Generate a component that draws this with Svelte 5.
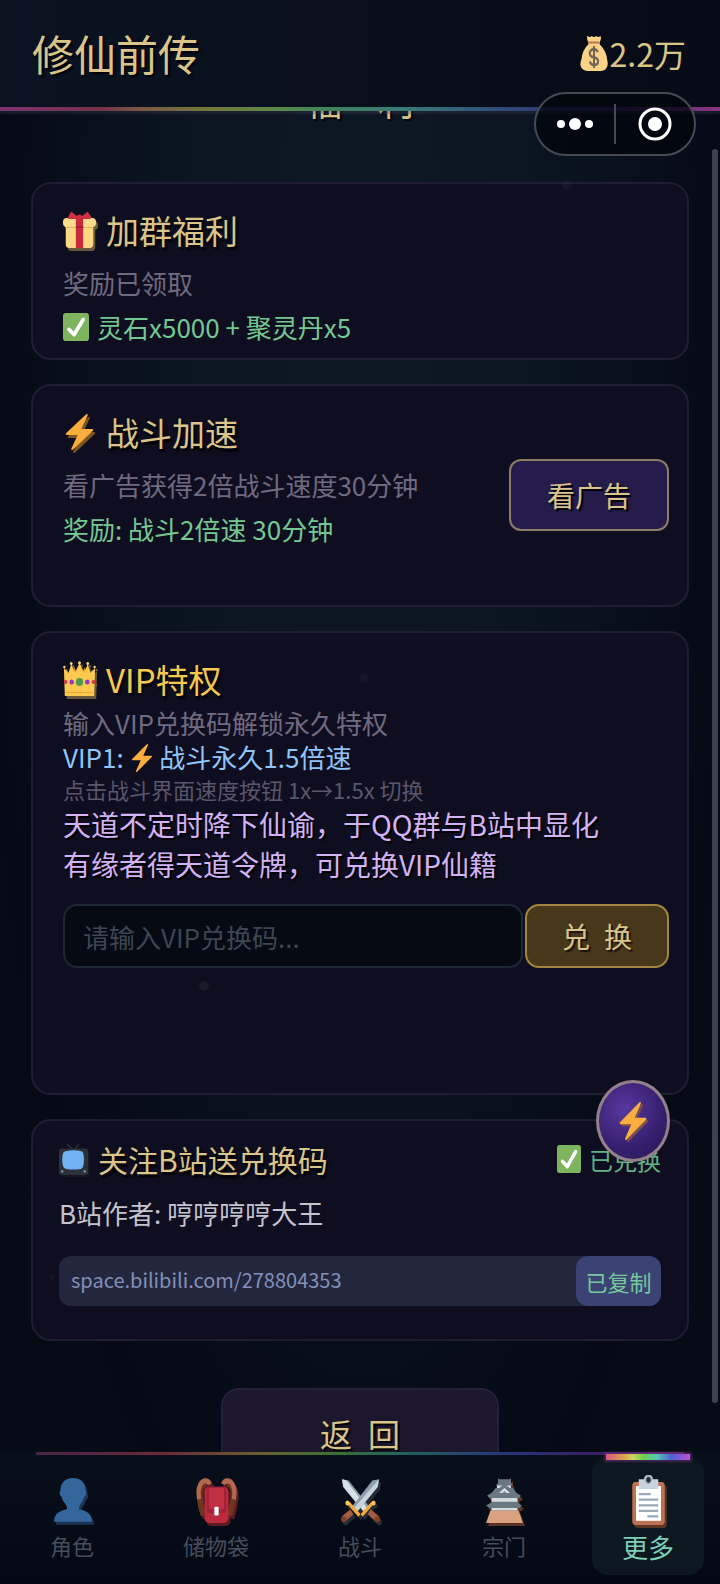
<script lang="ts">
  interface Tab {
    id: string;
    label: string;
  }

  const tabs: Tab[] = [
    { id: "person", label: "角色" },
    { id: "bag", label: "储物袋" },
    { id: "swords", label: "战斗" },
    { id: "castle", label: "宗门" },
    { id: "clipboard", label: "更多" },
  ];

  let activeTab = $state("clipboard");
  let vipCode = $state("");
</script>

{#snippet icon(name: string)}
  <svg class="icon {name}" viewBox="0 0 36 36" preserveAspectRatio="none" aria-hidden="true">
    {#if name === "bolt"}
      <path fill="#f9ae3f" d="M32.938 15.651C32.792 15.26 32.418 15 32 15H19.925L26.89 1.458c.219-.426.106-.947-.271-1.243C26.437.071 26.218 0 26 0c-.233 0-.466.082-.653.243L18 6.588 3.347 19.243c-.316.273-.43.714-.284 1.105S3.582 21 4 21h12.075L9.11 34.542c-.219.426-.106.947.271 1.243.182.144.401.215.619.215.233 0 .466-.082.653-.243L18 29.412l14.653-12.655c.317-.273.43-.714.285-1.106z" />
    {:else if name === "check"}
      <rect width="36" height="36" rx="4" fill="#7fb45f" />
      <path fill="#fff" d="M29.28 6.362c-1.156-.751-2.704-.422-3.458.736L14.936 23.877l-5.029-4.65c-1.014-.938-2.596-.875-3.533.138-.937 1.014-.875 2.596.139 3.533l7.209 6.666c.48.445 1.09.665 1.696.665.673 0 1.534-.282 2.099-1.139.332-.506 12.5-19.27 12.5-19.27.751-1.159.421-2.707-.737-3.458z" />
    {:else if name === "gift"}
      <path fill="#fbd983" d="M3 13h30v19a4 4 0 0 1-4 4H7a4 4 0 0 1-4-4z" />
      <path fill="#e9b457" d="M3 14h30v2H3z" />
      <rect y="6" width="36" height="9" rx="4" fill="#fcdc8c" />
      <path fill="#d03044" d="M5 6 8 1q1-2 3 0l4 3q3-3 6 0l4-3q2-2 3 0l3 5q0 1-4 1H8Q5 7 5 6z" />
      <path fill="#c82a40" d="M14 5h8v31h-8z" />
      <path fill="#a52037" d="M14 14h8v2h-8z" />
    {:else if name === "crown"}
      <path fill="#ef9f2e" d="M4 8l5 11 3-13 6 11 6-11 3 13 5-11v25H4z" />
      <path fill="#fdc94f" d="M1 7l5 5 3-9 4 9 5-10 5 10 4-9 3 9 5-5-1 28H2z" />
      <g fill="#ffdb83">
        <circle cx="1.5" cy="6" r="1.3" /><circle cx="9" cy="2.5" r="1.5" /><circle cx="18" cy="1.8" r="1.6" />
        <circle cx="27" cy="2.5" r="1.5" /><circle cx="34.5" cy="6" r="1.3" />
      </g>
      <circle cx="18" cy="21" r="4" fill="#4c9a50" />
      <circle cx="9.5" cy="21" r="2.5" fill="#9437c4" />
      <circle cx="26.5" cy="21" r="2.5" fill="#9437c4" />
      <circle cx="2.8" cy="21" r="2" fill="#d8354c" />
      <circle cx="33.2" cy="21" r="2" fill="#d8354c" />
      <path fill="#f0a637" d="M2 31h32v1H2z" />
    {:else if name === "tv"}
      <path d="M10 1l8 7 7-7" fill="none" stroke="#31373d" stroke-width="1.5" />
      <rect x="0" y="6" width="36" height="29" rx="3" fill="#2b3138" />
      <path fill="#70b0f3" d="M8 9q10-2 20 0 3 1 3 9t-3 10q-10 2-20 0-4-1-4-10t4-9z" />
      <circle cx="4" cy="31" r="1.5" fill="#7b8791" /><circle cx="32" cy="31" r="1.5" fill="#7b8791" />
    {:else if name === "money"}
      <path fill="#fbd286" d="M10 1q3 2 5 0 3 2 6 0 3 2 5 0 2 1 0 5l-1 3q9 7 10 16 2 6-2 9-2 2-6 2H9q-4 0-7-3-3-4 0-9 1-9 9-15l-1-3Q8 2 10 1z" />
      <path fill="#b97843" d="M10 6.500h15v2H10z" />
      <path d="M23 17q-2-3-5.500-3-5 1-5 4.200 0 3.200 5.500 4.100 5.300 1 5.300 4.300 0 3.400-5.300 3.400-4 0-5.500-3.500M18 11v22" fill="none" stroke="#706558" stroke-width="2.600" />
    {:else if name === "person"}
      <path fill="#34669c" d="M24 25c0-2 .5-3 2-5 1.700-1.500 2-4 3-5 2-1 2-4 1-5 0-7-5-10-11.500-10S7 3 7 10c-1.500 1-1 4 1 5 .5 2 1 3.500 3 5 1.500 2 2 3 2 5-6 1-12 3-12 10h35c0-7-6-9-12-10z" />
    {:else if name === "bag"}
      <path d="M8 4C1 6 1 17 6 30M28 4c7 2 7 13 2 26" fill="none" stroke="#71351f" stroke-width="5" />
      <path d="M12 5Q10 1 5 3 0 7 2 17M24 5q2-4 7-2 5 4 3 14" fill="none" stroke="#b3694d" stroke-width="4" />
      <rect x="7" y="7" width="22" height="29" rx="4" fill="#bb2b3d" />
      <path fill="#a3203a" d="M9 7h18v19q0 2-3 2H12q-3 0-3-2z" />
      <path fill="#c02f42" d="M11 8h14v15q0 2-2 2H13q-2 0-2-2z" />
      <rect x="16" y="23" width="4" height="7" rx="1" fill="#fff" />
    {:else if name === "swords"}
      <path fill="#8d9fac" d="M1 1l6 1 20 22-5 4L2 7z" />
      <path fill="#d7e1e8" d="M1 1l4 1 20 23-3 3L2 7z" />
      <path d="M19 30l10-10" stroke="#f0a93b" stroke-width="3" />
      <path d="M26 27l8 6" stroke="#a45d42" stroke-width="5" />
      <circle cx="33.500" cy="33" r="2.500" fill="#7d3d27" />
      <path fill="#8d9fac" d="M35 1l-6 1L9 24l5 4L34 7z" />
      <path fill="#c6d3dc" d="M35 1l-1 6-20 21-3-3z" />
      <path d="M17 30L7 20" stroke="#f0a93b" stroke-width="3" />
      <path d="M10 27l-8 6" stroke="#a45d42" stroke-width="5" />
      <circle cx="2.500" cy="33" r="2.500" fill="#7d3d27" />
      <circle cx="6" cy="20" r="2" fill="#ffc158" /><circle cx="30" cy="20" r="2" fill="#ffc158" />
    {:else if name === "castle"}
      <path fill="#d9a17f" d="M5 26h26l4 10H1z" />
      <path fill="#d2dae0" d="M6 13h24v13H6zM11 5h13v7H11z" />
      <path fill="#697780" d="M12 0l1 1h10l1-1v4l2 2H10l2-2zM10 8h3l5-3 5 3h3l3 4 4 2-1 2H4l-2-2 4-2zM7 19h22l5 3-2 2H4l-3-2z" />
      <path fill="#dfe6eb" d="M18 8l5 4H13z" />
      <path fill="#87939c" d="M18 10l2 2h-4z" />
    {:else if name === "clipboard"}
      <rect x="3" y="5" width="30" height="31" rx="3" fill="#bd7155" />
      <path fill="#fff" d="M6.500 8h23v25h-23z" />
      <path fill="#c9d3dc" d="M9 3h5q0-3 4-3t4 3h5v7H9z" />
      <circle cx="18" cy="3.500" r="2.500" fill="#292f33" stroke="#98a6b1" />
      <path fill="#9aabb7" d="M9 13h11v1.600H9zM9 17h18v1.600H9zM9 21h18v1.600H9zM9 25h18v1.600H9zM17 29h10v1.600H17z" />
    {/if}
  </svg>
{/snippet}

<div class="app">
  <header class="topbar">
    <h1>修仙前传</h1>
    <div class="coins">{@render icon("money")}<span>2.2万</span></div>
  </header>

  <div class="capsule">
    <button aria-label="菜单">
      <svg viewBox="0 0 40 40" width="40" height="40" fill="#fff">
        <circle cx="6" cy="20" r="4" /><circle cx="20" cy="20" r="6" /><circle cx="34" cy="20" r="4" />
      </svg>
    </button>
    <button aria-label="关闭">
      <svg viewBox="0 0 40 40" width="40" height="40">
        <circle cx="20" cy="20" r="15" fill="none" stroke="#fff" stroke-width="3" />
        <circle cx="20" cy="20" r="7" fill="#fff" />
      </svg>
    </button>
  </div>

  <main>
    <h2 class="page-title">福&emsp;利</h2>

    <section class="card">
      <h3>{@render icon("gift")}加群福利</h3>
      <p class="desc">奖励已领取</p>
      <p class="reward">{@render icon("check")}灵石x5000 + 聚灵丹x5</p>
    </section>

    <section class="card boost">
      <div>
        <h3>{@render icon("bolt")}战斗加速</h3>
        <p class="desc">看广告获得2倍战斗速度30分钟</p>
        <p class="reward">奖励: 战斗2倍速 30分钟</p>
      </div>
      <button class="ad-btn">看广告</button>
    </section>

    <section class="card vip">
      <h3>{@render icon("crown")}VIP特权</h3>
      <p class="desc">输入VIP兑换码解锁永久特权</p>
      <p class="perk">VIP1: {@render icon("bolt")} 战斗永久1.5倍速</p>
      <p class="hint">点击战斗界面速度按钮 1x→1.5x 切换</p>
      <p class="lore">天道不定时降下仙谕，于QQ群与B站中显化<br />有缘者得天道令牌，可兑换VIP仙籍</p>
      <form class="redeem" onsubmit={(e) => e.preventDefault()}>
        <input type="text" bind:value={vipCode} placeholder="请输入VIP兑换码..." aria-label="VIP兑换码" />
        <button type="submit">兑&ensp;换</button>
      </form>
    </section>

    <section class="card follow">
      <div class="follow-head">
        <h3>{@render icon("tv")}关注B站送兑换码</h3>
        <span class="status">{@render icon("check")}已兑换</span>
      </div>
      <p class="author">B站作者: 哼哼哼哼大王</p>
      <div class="link">
        <a href="https://space.bilibili.com/278804353">space.bilibili.com/278804353</a>
        <button>已复制</button>
      </div>
    </section>

    <button class="back">返&ensp;回</button>
  </main>

  <div class="particles" aria-hidden="true"><i></i><i></i><i></i><i></i></div>
  <div class="thumb"></div>
  <button class="fab" aria-label="加速">{@render icon("bolt")}</button>

  <nav>
    {#each tabs as tab (tab.id)}
      <button class="tab" class:active={activeTab === tab.id} onclick={() => (activeTab = tab.id)}>
        {@render icon(tab.id)}
        <span>{tab.label}</span>
      </button>
    {/each}
  </nav>
</div>

<style>
  :global(body) {
    background: #060b16;
  }

  .app {
    position: relative;
    display: flex;
    flex-direction: column;
    height: 100vh;
    overflow: hidden;
    background: radial-gradient(ellipse at 50% 15%, #0d1825 0%, #0a1520 35%, #050a15 75%, #070d16 100%);
    color: #dac48a;
    font-family: "Noto Sans CJK SC", sans-serif;
  }

  h1,
  h2,
  h3,
  p {
    margin: 0;
    font-weight: 400;
  }

  button {
    padding: 0;
    border: none;
    background: none;
    color: inherit;
    font: inherit;
    cursor: pointer;
  }

  .icon {
    flex-shrink: 0;
    overflow: visible;
  }

  .topbar {
    position: relative;
    display: flex;
    align-items: center;
    justify-content: space-between;
    flex-shrink: 0;
    height: 107px;
    padding: 0 34px 2px 32px;
    box-sizing: border-box;
    background: linear-gradient(90deg, #0b1322, #080d18 70%, #070b15);
  }

  .topbar::after {
    content: "";
    position: absolute;
    inset: auto 0 -4px;
    height: 4px;
    background: linear-gradient(90deg, #7d3470, #75334a 14%, #7a5a40 20%, #74753f 28%, #5d8a48 38%, #3f825e 46%, #3a7a78 56%, #2f4b7a 70%, #33246c 82%, #8a347e);
    box-shadow: 0 3px 1px rgba(70, 60, 90, 0.3);
  }

  .topbar h1 {
    font-size: 42px;
    text-shadow: 2px 2px 2px #000;
  }

  .coins {
    display: flex;
    align-items: center;
    gap: 2px;
    font-size: 32px;
  }

  .coins .icon {
    width: 28px;
    height: 36px;
  }

  .capsule {
    position: absolute;
    z-index: 3;
    top: 92px;
    right: 24px;
    display: flex;
    align-items: center;
    box-sizing: border-box;
    width: 162px;
    height: 64px;
    border: 2px solid #454a53;
    border-radius: 32px;
    background: rgba(2, 5, 12, 0.75);
  }

  .capsule button {
    display: grid;
    flex: 1;
    place-items: center;
  }

  .capsule button:first-child {
    border-right: 2px solid #454a53;
  }

  main {
    flex: 1;
    min-height: 0;
    padding: 4px 31px 0;
    overflow-y: auto;
    scrollbar-width: none;
  }

  .page-title {
    margin: -31px 0 62px;
    font-size: 36px;
    line-height: 40px;
    text-align: center;
    text-shadow: 2px 2px 1px #000;
  }

  .card {
    box-sizing: border-box;
    margin-bottom: 24px;
    padding: 24px 18px 9px 30px;
    border: 2px solid #1e1d34;
    border-radius: 20px;
    background: #0f0e20;
  }

  .card h3 {
    display: flex;
    align-items: center;
    gap: 10px;
    margin-bottom: 9px;
    font-size: 33px;
    line-height: 44px;
    text-shadow: 2px 3px 2px #000;
  }

  h3 .icon {
    width: 33px;
    height: 36px;
    filter: drop-shadow(2px 3px 0 #6c5a3c);
  }

  h3 .bolt {
    filter: drop-shadow(2px 3px 0 #7d571f);
  }

  .card p {
    font-size: 26px;
    line-height: 44px;
  }

  .card .desc {
    color: #6f6a80;
  }

  .card .reward {
    display: flex;
    align-items: center;
    gap: 8px;
    color: #75c792;
  }

  .check {
    width: 26px;
    height: 28px;
  }

  .boost {
    display: flex;
    justify-content: space-between;
    min-height: 223px;
  }

  .ad-btn {
    align-self: center;
    box-sizing: border-box;
    width: 160px;
    height: 72px;
    margin-bottom: 17px;
    border: 2px solid #8c7c68;
    border-radius: 12px;
    background: #251c4b;
    font-size: 28px;
    text-shadow: 2px 2px 1px #000;
  }

  .vip {
    min-height: 464px;
  }

  .vip h3 {
    margin-bottom: 5px;
    color: #f5c84f;
  }

  .vip .desc,
  .vip .perk {
    line-height: 34px;
  }

  .vip .perk {
    color: #90c5f8;
  }

  .perk .icon {
    width: 24px;
    height: 28px;
    vertical-align: -4px;
  }

  .vip .hint {
    color: #5a566b;
    font-size: 22px;
    line-height: 30px;
  }

  .vip .lore {
    color: #d3b2f5;
    font-size: 28px;
    line-height: 40px;
    text-shadow: 2px 2px 1px #000;
  }

  .redeem {
    display: flex;
    gap: 2px;
    margin-top: 20px;
  }

  .redeem input,
  .redeem button {
    box-sizing: border-box;
    height: 64px;
    border: 2px solid #1e2734;
    border-radius: 14px;
  }

  .redeem input {
    flex: 1;
    min-width: 0;
    padding: 0 18px;
    background: #050a13;
    color: #dac48a;
    font-family: inherit;
    font-size: 26px;
    outline: none;
  }

  .redeem input::placeholder {
    color: #3d4652;
    opacity: 1;
  }

  .redeem button {
    width: 144px;
    border-color: #a0873d;
    background: #47371b;
    font-size: 28px;
    text-shadow: 2px 2px 1px #1c1408;
  }

  .follow {
    padding: 16px 26px 33px;
  }

  .follow-head {
    display: flex;
    align-items: center;
    justify-content: space-between;
    margin-bottom: 15px;
  }

  .follow h3 {
    margin: 0;
    font-size: 30px;
  }

  .follow .tv {
    width: 29px;
    height: 33px;
    filter: drop-shadow(2px 2px 0 #15161f);
  }

  .status {
    display: flex;
    align-items: center;
    gap: 8px;
    color: #61b285;
    font-size: 24px;
  }

  .status .check {
    width: 24px;
  }

  .follow .author {
    color: #c5c3cd;
    line-height: 34px;
  }

  .link {
    display: flex;
    justify-content: space-between;
    box-sizing: border-box;
    height: 50px;
    margin-top: 26px;
    border-radius: 12px;
    background: #23273d;
  }

  .link a {
    padding-left: 12px;
    color: #8390b8;
    font-size: 20px;
    line-height: 48px;
    text-decoration: none;
  }

  .link button {
    width: 85px;
    border-radius: 12px;
    background: #3b4374;
    color: #75c79c;
    font-size: 22px;
  }

  .back {
    display: block;
    box-sizing: border-box;
    width: 278px;
    height: 90px;
    margin: 47px auto 0;
    border: 2px solid #252039;
    border-radius: 18px;
    background: #1c172b;
    font-size: 32px;
    text-shadow: 2px 2px 1px #000;
  }

  .particles i {
    position: absolute;
    top: 180px;
    left: 562px;
    width: 10px;
    height: 10px;
    border-radius: 50%;
    background: rgba(100, 130, 150, 0.06);
  }

  .particles i:nth-child(2) {
    top: 673px;
    left: 359px;
  }

  .particles i:nth-child(3) {
    top: 981px;
    left: 199px;
    background: rgba(130, 130, 120, 0.1);
  }

  .particles i:nth-child(4) {
    top: 1274px;
    left: 49px;
    width: 6px;
    height: 6px;
  }

  .thumb {
    position: absolute;
    top: 149px;
    right: 2px;
    bottom: 181px;
    width: 6px;
    border-radius: 3px;
    background: #3d424d;
  }

  .fab {
    position: absolute;
    right: 50px;
    bottom: 422px;
    display: grid;
    place-items: center;
    box-sizing: border-box;
    width: 74px;
    height: 82px;
    border: 3px solid #93808a;
    border-radius: 50%;
    background: radial-gradient(circle at 38% 35%, rgba(92, 58, 166, 0.96), rgba(54, 31, 112, 0.96) 60%, rgba(40, 22, 84, 0.96));
  }

  .fab .icon {
    width: 32px;
    height: 38px;
    filter: drop-shadow(2px 2px 0 #7b4f4a);
  }

  nav {
    position: relative;
    z-index: 2;
    display: grid;
    grid-template-columns: repeat(5, 1fr);
    flex-shrink: 0;
    height: 131px;
    background: linear-gradient(#08101b, #040813);
  }

  nav::before {
    content: "";
    position: absolute;
    top: -1px;
    right: 5%;
    left: 5%;
    height: 3px;
    background: linear-gradient(90deg, #4a2548, #6c2938 20%, #6a6030 35%, #3f702f 45%, #23645a 56%, #25367a 72%, #362067 85%, #56246a);
  }

  .tab {
    position: relative;
    display: flex;
    flex-direction: column;
    align-items: center;
    gap: 6px;
    margin: 4px 16px 9px;
    padding-top: 21px;
    border-radius: 16px;
    color: #464d5b;
    font-size: 22px;
    line-height: 32px;
  }

  .tab .icon {
    width: 39px;
    height: 45px;
    filter: drop-shadow(2px 3px 0 #5b3426);
  }

  .tab .person {
    filter: drop-shadow(2px 3px 0 #1b3454);
  }

  .tab .bag {
    filter: drop-shadow(2px 3px 0 #5d1b22);
  }

  .tab .swords {
    filter: drop-shadow(2px 3px 0 #252c33);
  }

  .tab.active {
    padding-top: 18px;
    background: #0c1720;
    color: #7ccfb9;
    font-size: 26px;
  }

  .tab.active .icon {
    height: 50px;
  }

  .tab.active::before {
    content: "";
    position: absolute;
    inset: -3px 14px auto;
    height: 6px;
    background: linear-gradient(90deg, #d8557f, #dba04f 20%, #ced45c 32%, #66d04e 45%, #58c8b4 60%, #4a62d2 78%, #c34fd6);
    box-shadow: 0 0 2px 2px rgba(120, 50, 130, 0.5);
  }
</style>
